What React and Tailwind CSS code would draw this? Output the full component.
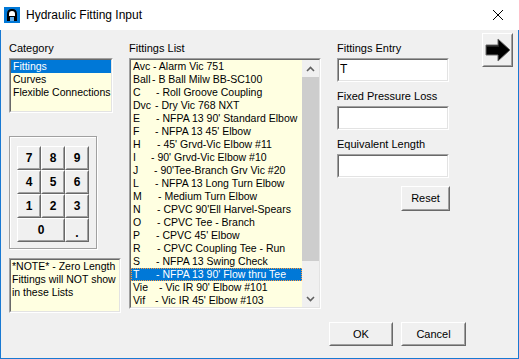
import React from "react";

const items = [
  ["Avc", 20, "- Alarm Vic 751"],
  ["Ball", 19, "- B Ball Milw BB-SC100"],
  ["C", 23, "- Roll Groove Coupling"],
  ["Dvc", 22, "- Dry Vic 768 NXT"],
  ["E", 23, "- NFPA 13 90' Standard Elbow"],
  ["F", 22, "- NFPA 13 45' Elbow"],
  ["H", 24, "- 45' Grvd-Vic Elbow #11"],
  ["I", 18, "- 90' Grvd-Vic Elbow #10"],
  ["J", 21, "- 90'Tee-Branch Grv Vic #20"],
  ["L", 22, "- NFPA 13 Long Turn Elbow"],
  ["M", 25, "- Medium Turn Elbow"],
  ["N", 24, "- CPVC 90'Ell Harvel-Spears"],
  ["O", 24, "- CPVC Tee - Branch"],
  ["P", 23, "- CPVC 45' Elbow"],
  ["R", 24, "- CPVC Coupling Tee - Run"],
  ["S", 23, "- NFPA 13 Swing Check"],
  ["T", 23, "- NFPA 13 90' Flow thru Tee"],
  ["Vie", 26, "- Vic IR 90' Elbow #101"],
  ["Vif", 22, "- Vic IR 45' Elbow #103"],
];

function Sunken({ className = "", innerClass = "", children }) {
  return (
    <div className={"border border-t-[#a0a0a0] border-l-[#a0a0a0] border-r-white border-b-white " + className}>
      <div className={"h-full border border-t-[#696969] border-l-[#696969] border-r-[#e3e3e3] border-b-[#e3e3e3] " + innerClass}>
        {children}
      </div>
    </div>
  );
}

function Btn({ className = "", innerClass = "", children }) {
  return (
    <div className={"border border-t-white border-l-white border-r-[#696969] border-b-[#696969] bg-[#f0f0f0] " + className}>
      <div className={"h-full border border-t-[#f0f0f0] border-l-[#f0f0f0] border-r-[#a0a0a0] border-b-[#a0a0a0] flex items-center justify-center " + innerClass}>
        {children}
      </div>
    </div>
  );
}

function Label({ children, className = "" }) {
  return <div className={"h-[13px] leading-[13px] text-[11px] text-black whitespace-nowrap " + className}>{children}</div>;
}

export default function App() {
  return (
    <div className="w-[519px] h-[359px] flex flex-col bg-white font-['Liberation_Sans',Arial,sans-serif] text-black overflow-hidden">
      {/* Title bar */}
      <div className="h-[30px] flex items-center bg-white shrink-0">
        <div className="ml-[4px] w-[16px] h-[16px] bg-[#0078d7] flex items-center justify-center">
          <svg width="14" height="14" viewBox="0 0 14 14">
            <path d="M2 13 L2 6 Q2 1 7 1 Q12 1 12 6 L12 13 L9 13 L9 9 L5 9 L5 13 Z" fill="#000" />
            <path d="M4 8 L4 6 Q4 3 7 3 Q10 3 10 6 L10 8 Z" fill="#fff" />
            <path d="M6 9 L6 13 M8 9 L8 13" stroke="#fff" strokeWidth="0.8" />
          </svg>
        </div>
        <div className="ml-[6px] text-[12px] leading-[16px] text-black">Hydraulic Fitting Input</div>
        <div className="ml-auto mr-[16px] w-[10px] h-[10px]">
          <svg width="10" height="10" viewBox="0 0 10 10">
            <path d="M0 0 L10 10 M10 0 L0 10" stroke="#000" strokeWidth="1" />
          </svg>
        </div>
      </div>

      {/* Body */}
      <div className="flex-1 flex flex-col bg-[#f0f0f0] border-l border-r border-b border-[#1979d2]">
        <div className="flex items-start pl-[8px]">
          {/* Left column */}
          <div className="w-[112px] pt-[12px] flex flex-col">
            <Label>Category</Label>
            <Sunken className="mt-[3px] w-[104px] h-[55px]" innerClass="bg-[#ffffe1] text-[10.5px] whitespace-nowrap overflow-hidden">
              <div className="h-[13px] leading-[13px] px-[2px] bg-[#0078d7] text-white">Fittings</div>
              <div className="h-[13px] leading-[13px] px-[2px]">Curves</div>
              <div className="h-[13px] leading-[13px] px-[2px]">Flexible Connections</div>
            </Sunken>
            <div className="mt-[23px] w-[88px] h-[113px] border border-[#a0a0a0] shadow-[inset_1px_1px_0_#fff,1px_1px_0_#fff] pl-[7px] pt-[9px]">
              <div className="grid grid-cols-[24px_24px_24px] grid-rows-[24px_24px_24px_24px] text-[12px] font-bold">
                <Btn>7</Btn>
                <Btn>8</Btn>
                <Btn>9</Btn>
                <Btn>4</Btn>
                <Btn>5</Btn>
                <Btn>6</Btn>
                <Btn>1</Btn>
                <Btn>2</Btn>
                <Btn>3</Btn>
                <Btn className="col-span-2">0</Btn>
                <Btn innerClass="pt-[6px]">.</Btn>
              </div>
            </div>
            <Sunken className="mt-[9px] w-[112px] h-[55px]" innerClass="bg-[#ffffe1] overflow-hidden">
              <div className="text-[10.5px] leading-[13px] px-[1px] whitespace-nowrap">
                <div>*NOTE* - Zero Length</div>
                <div>Fittings will NOT show</div>
                <div>in these Lists</div>
              </div>
            </Sunken>
          </div>

          {/* Middle column */}
          <div className="ml-[8px] w-[192px] pt-[12px] flex flex-col">
            <Label>Fittings List</Label>
            <Sunken className="mt-[3px] w-[192px] h-[251px]" innerClass="flex bg-[#ffffe1]">
              <div className="flex-1 flex flex-col min-w-0 overflow-hidden">
                {items.map(([code, off, desc]) => {
                  const sel = code === "T";
                  return (
                    <div
                      key={code}
                      className={
                        "h-[13px] leading-[11px] text-[10.5px] px-[1px] flex whitespace-nowrap border " +
                        (sel ? "bg-[#0078d7] text-white border-dotted border-[#ff9a3c]" : "border-transparent")
                      }
                    >
                      <span className="shrink-0" style={{ width: off + "px" }}>{code}</span>
                      <span>{desc}</span>
                    </div>
                  );
                })}
              </div>
              <div className="w-[17px] shrink-0 flex flex-col bg-[#f0f0f0]">
                <div className="h-[17px] flex items-center justify-center">
                  <svg width="9" height="6" viewBox="0 0 9 6">
                    <path d="M1 5 L4.5 1.5 L8 5" stroke="#606060" strokeWidth="1.6" fill="none" />
                  </svg>
                </div>
                <div className="h-[184px] bg-[#cdcdcd]" />
                <div className="flex-1" />
                <div className="h-[17px] flex items-center justify-center">
                  <svg width="9" height="6" viewBox="0 0 9 6">
                    <path d="M1 1 L4.5 4.5 L8 1" stroke="#606060" strokeWidth="1.6" fill="none" />
                  </svg>
                </div>
              </div>
            </Sunken>
          </div>

          {/* Right column */}
          <div className="ml-[16px] w-[113px] pt-[12px] flex flex-col">
            <Label>Fittings Entry</Label>
            <Sunken className="mt-[3px] w-[112px] h-[24px]" innerClass="bg-white px-[1px]">
              <div className="text-[12px] leading-[18px]">T</div>
            </Sunken>
            <Label className="mt-[8px]">Fixed Pressure Loss</Label>
            <Sunken className="mt-[3px] w-[112px] h-[24px]" innerClass="bg-white" />
            <Label className="mt-[8px]">Equivalent Length</Label>
            <Sunken className="mt-[3px] w-[112px] h-[24px]" innerClass="bg-white" />
            <div className="mt-[8px] flex justify-end">
              <Btn className="w-[49px] h-[25px] text-[11px]">Reset</Btn>
            </div>
          </div>

          {/* Arrow */}
          <div className="ml-[32px] pt-[3px]">
            <Btn className="w-[31px] h-[34px]">
              <svg width="26" height="24" viewBox="0 0 26 24">
                <path d="M1 7 L13 7 L13 1 L25 12 L13 23 L13 17 L1 17 Z" fill="#000" stroke="#6b6b6b" strokeWidth="1" />
                <path d="M2 8 L14 8" stroke="#444" strokeWidth="1" />
              </svg>
            </Btn>
          </div>
        </div>

        {/* Bottom buttons */}
        <div className="mt-[9px] flex gap-[8px] pl-[328px]">
          <Btn className="w-[64px] h-[24px] text-[11px]">OK</Btn>
          <Btn className="w-[65px] h-[24px] text-[11px]">Cancel</Btn>
        </div>
      </div>
    </div>
  );
}
